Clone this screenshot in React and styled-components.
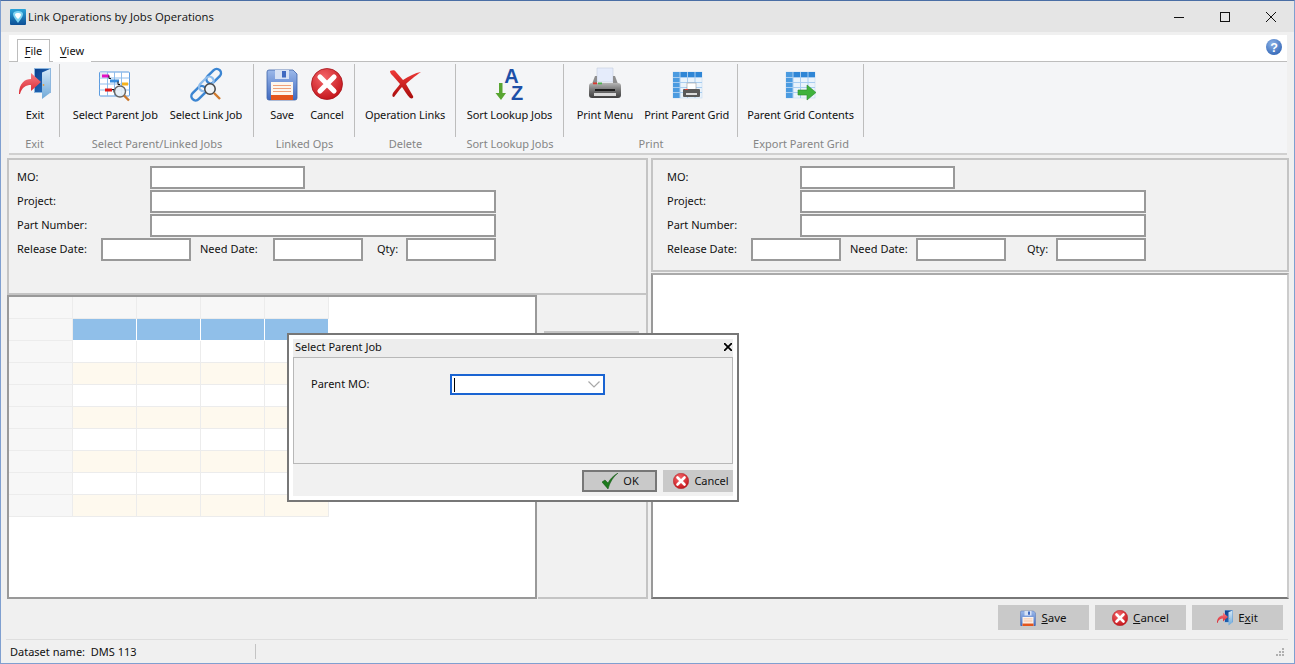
import React from 'react';
import styled, { createGlobalStyle } from 'styled-components';

const GlobalStyle = createGlobalStyle`
  html, body {
    margin: 0;
    padding: 0;
    overflow: hidden;
  }
  body {
    font-family: "Noto Sans", "Liberation Sans", sans-serif;
    font-size: 11px;
    color: #111;
  }
  * {
    box-sizing: border-box;
  }
`;

const Window = styled.div`
  position: relative;
  width: 1295px;
  height: 664px;
  display: flex;
  flex-direction: column;
  background: #f0f0f0;
  border: 1px solid #7f9fd0;
  border-top: 1px solid #4a6ea5;
`;

const TitleBar = styled.div`
  height: 31px;
  flex: none;
  background: #e5e5e5;
  display: flex;
  align-items: center;
  padding: 0 18px 0 9px;
`;

const TitleText = styled.div`
  font-family: "Open Sans", "Noto Sans", sans-serif;
  font-size: 11.3px;
  margin-left: 2px;
  flex: 1;
`;

const WindowControls = styled.div`
  display: flex;
  gap: 36px;
`;

const TabRow = styled.div`
  height: 27px;
  flex: none;
  margin: 3px 7px 0 8px;
  padding-left: 8px;
  background: #fff;
  border-bottom: 1px solid #bdbdbd;
  display: flex;
  align-items: flex-end;
  position: relative;
`;

const Tab = styled.div`
  height: ${(p) => (p.$active ? '23px' : '22px')};
  width: ${(p) => (p.$active ? '33px' : '38px')};
  margin-left: ${(p) => (p.$active ? 0 : 3)}px;
  margin-bottom: -1px;
  padding-top: 3px;
  text-align: center;
  background: #fff;
  border: ${(p) => (p.$active ? '1px solid #bdbdbd' : 'none')};
  border-bottom: none;
  u {
    text-underline-offset: 2px;
  }
`;

const HelpSpot = styled.div`
  position: absolute;
  right: 5px;
  top: 4px;
  line-height: 0;
`;

const Ribbon = styled.div`
  height: 93px;
  flex: none;
  margin: 0 7px 0 8px;
  background: #f4f5f7;
  border-bottom: 2px solid #d0d0d0;
  display: flex;
`;

const Group = styled.div`
  width: ${(p) => p.$w}px;
  flex: none;
  display: flex;
  flex-direction: column;
`;

const GroupButtons = styled.div`
  height: 73px;
  margin-top: 2px;
  padding-left: ${(p) => p.$pl || 0}px;
  border-right: 1px solid #bdbdbd;
  display: flex;
  justify-content: center;
  gap: ${(p) => p.$gap || 0}px;
`;

const GroupLabel = styled.div`
  height: 14px;
  line-height: 14px;
  text-align: center;
  color: #858585;
  white-space: nowrap;
`;

const RibbonButton = styled.div`
  display: flex;
  flex-direction: column;
  align-items: center;
  white-space: nowrap;
  padding-top: 4px;
`;

const IconSlot = styled.div`
  height: 32px;
  line-height: 0;
  display: flex;
  align-items: flex-start;
  svg {
    overflow: visible;
  }
`;

const ButtonLabel = styled.div`
  margin-top: 7px;
  line-height: 16px;
  letter-spacing: -0.1px;
`;

const Main = styled.div`
  flex: none;
  height: 441px;
  margin: 3px 5px 0 6px;
  display: flex;
  gap: 3px;
`;

const Side = styled.div`
  width: ${(p) => p.$w}px;
  flex: none;
  display: flex;
  flex-direction: column;
`;

const FormPanel = styled.div`
  height: ${(p) => p.$h}px;
  flex: none;
  background: #f1f1f1;
  border: 2px solid #c4c4c4;
  padding: 6px 8px 0 ${(p) => p.$pl}px;
  display: flex;
  flex-direction: column;
  gap: 1px;
`;

const FormRow = styled.div`
  display: flex;
  align-items: center;
  height: 23px;
`;

const FieldLabel = styled.div`
  width: ${(p) => p.$w}px;
  flex: none;
  margin-left: ${(p) => p.$ml || 0}px;
  padding-bottom: 2px;
  white-space: nowrap;
`;

const Field = styled.div`
  width: ${(p) => p.$w}px;
  height: 23px;
  flex: none;
  background: #fff;
  border: 2px solid #999;
`;

const LowerRow = styled.div`
  flex: 1;
  display: flex;
  min-height: 0;
`;

const GridFrame = styled.div`
  width: 530px;
  flex: none;
  background: #fff;
  border: 2px solid #999;
`;

const GridTable = styled.div`
  display: grid;
  grid-template-columns: repeat(5, 64px);
  grid-auto-rows: 22px;
  width: 320px;
`;

const GridCell = styled.div`
  background: ${(p) =>
    p.$kind === 'head' ? '#f7f7f7' : p.$kind === 'sel' ? '#90bfe9' : p.$kind === 'alt' ? '#fef9ee' : '#fff'};
  border-right: 1px solid ${(p) => (p.$kind === 'sel' ? '#fff' : '#ececec')};
  border-bottom: 1px solid ${(p) => (p.$kind === 'sel' ? '#fff' : '#ececec')};
`;

const MiddleStrip = styled.div`
  flex: 1;
  background: #f1f1f1;
  border-right: 2px solid #c4c4c4;
  border-bottom: 2px solid #c4c4c4;
  padding: 36px 7px 0 6px;
  margin-left: 1px;
`;

const StripInner = styled.div`
  height: 120px;
  border-top: 2px solid #c4c4c4;
`;

const WhitePane = styled.div`
  flex: 1;
  margin-top: 1px;
  background: #fff;
  border: 2px solid #aaa;
  border-left-color: #999;
  border-bottom-color: #777;
  border-right-color: #ccc;
`;

const ActionRow = styled.div`
  height: 40px;
  flex: none;
  padding: 6px 11px 0 0;
  display: flex;
  justify-content: flex-end;
  gap: 6px;
`;

const ActionButton = styled.div`
  width: 91px;
  height: 25px;
  background: #c9c9c9;
  display: flex;
  align-items: center;
  justify-content: center;
  gap: 5px;
  line-height: 0;
  font-size: 11.5px;
  span {
    line-height: 16px;
  }
`;

const StatusBar = styled.div`
  flex: 1;
  margin: 0 6px 0 5px;
  border-top: 1px solid #dedede;
  display: flex;
  align-items: center;
  position: relative;
  padding-left: 4px;
`;

const StatusCell = styled.div`
  width: 246px;
  height: 15px;
  line-height: 15px;
  border-right: 1px solid #c4c4c4;
  white-space: pre;
`;

const Grip = styled.div`
  position: absolute;
  right: 3px;
  bottom: 6px;
  line-height: 0;
`;

const Dialog = styled.div`
  position: absolute;
  left: 286px;
  top: 332px;
  width: 452px;
  height: 169px;
  background: #fff;
  border: 2px solid #777;
  padding: 4px;
  display: flex;
  flex-direction: column;
`;

const DialogTitle = styled.div`
  height: 18px;
  flex: none;
  background: #ededed;
  display: flex;
  align-items: center;
  justify-content: space-between;
  padding: 0 1px 3px 2px;
  line-height: 0;
`;

const DialogTitleText = styled.span`
  line-height: 14px;
`;

const DialogBody = styled.div`
  height: 107px;
  flex: none;
  background: #f1f1f1;
  border: 1px solid #b8b8b8;
  padding: 16px 0 0 17px;
  display: flex;
  align-items: flex-start;
`;

const DialogLabel = styled.div`
  width: 139px;
  line-height: 20px;
  flex: none;
`;

const Combo = styled.div`
  width: 155px;
  height: 21px;
  background: #fff;
  border: 2px solid #1a64d2;
  display: flex;
  align-items: center;
  justify-content: space-between;
  padding: 0 3px 0 2px;
  line-height: 0;
`;

const Caret = styled.div`
  width: 1px;
  height: 14px;
  background: #000;
`;

const DialogFooter = styled.div`
  flex: 1;
  background: #f1f1f1;
  display: flex;
  justify-content: flex-end;
  gap: 6px;
  padding-top: 6px;
`;

const DialogButton = styled.div`
  width: ${(p) => p.$w}px;
  height: 22px;
  padding-left: ${(p) => p.$pl || 0}px;
  background: #c9c9c9;
  border: ${(p) => (p.$default ? '2px solid #777' : 'none')};
  display: flex;
  align-items: center;
  justify-content: center;
  gap: 5px;
  line-height: 0;
  span {
    line-height: 16px;
  }
`;

const AppIcon = () => (
  <svg width="16" height="16" viewBox="0 0 16 16">
    <defs>
      <linearGradient id="appbg" x1="0" y1="0" x2="0" y2="1">
        <stop offset="0" stopColor="#2aa3d8" />
        <stop offset="1" stopColor="#0d4f96" />
      </linearGradient>
    </defs>
    <rect width="16" height="16" rx="1" fill="url(#appbg)" />
    <path d="M3 5c0-2 2.500-3 5-3s5 1 5 3c0 3-3 6-5 9-2-3-5-6-5-9z" fill="#7fd4f2" />
    <path d="M5 5.500c0-1 1.500-1.500 3-1.500s3 .5 3 1.500c0 1.500-1.500 3-3 4.500-1.500-1.500-3-3-3-4.500z" fill="#fff" />
  </svg>
);

const Minimize = () => (
  <svg width="10" height="10" viewBox="0 0 10 10">
    <path d="M0 5.500h10" stroke="#111" fill="none" />
  </svg>
);

const Maximize = () => (
  <svg width="10" height="10" viewBox="0 0 10 10">
    <rect x=".5" y=".5" width="9" height="9" stroke="#111" fill="none" />
  </svg>
);

const CloseGlyph = ({ size = 10, weight = 1, color = '#111' }) => (
  <svg width={size} height={size} viewBox="0 0 10 10">
    <path d="M0 0l10 10M10 0L0 10" stroke={color} strokeWidth={weight} fill="none" />
  </svg>
);

const HelpIcon = () => (
  <svg width="16" height="16" viewBox="0 0 16 16">
    <defs>
      <radialGradient id="helpbg" cx=".4" cy=".3" r=".8">
        <stop offset="0" stopColor="#8cb2e6" />
        <stop offset="1" stopColor="#2d62b4" />
      </radialGradient>
    </defs>
    <circle cx="8" cy="8" r="8" fill="url(#helpbg)" />
    <text x="8" y="12.500" textAnchor="middle" fontFamily="Liberation Sans, sans-serif" fontWeight="700" fontSize="12.500" fill="#fff">?</text>
  </svg>
);

const ExitIcon = ({ size = 32 }) => (
  <svg width={size} height={size} viewBox="0 0 32 32">
    <defs>
      <linearGradient id="exitdoor" x1="0" y1="0" x2="1" y2="1">
        <stop offset="0" stopColor="#0b3f8c" />
        <stop offset="1" stopColor="#2a76c4" />
      </linearGradient>
      <linearGradient id="exitpanel" x1="0" y1="0" x2="0" y2="1">
        <stop offset="0" stopColor="#d5e9f8" />
        <stop offset="1" stopColor="#6ea8d8" />
      </linearGradient>
      <linearGradient id="exitarrow" x1="0" y1="0" x2="0" y2="1">
        <stop offset="0" stopColor="#f77f85" />
        <stop offset="1" stopColor="#d8222c" />
      </linearGradient>
    </defs>
    <rect x="15" y="0" width="17" height="25" fill="#8db7df" />
    <rect x="16" y="1" width="15" height="23" fill="url(#exitdoor)" />
    <path d="M23 4.500L31 1v24l-8 6z" fill="url(#exitpanel)" />
    <circle cx="24.500" cy="17" r=".9" fill="#e39a3a" />
    <path d="M0 26C0 15 6 11 12 11V5l10 9-10 9v-6c-5 0-9 2-11 9z" fill="url(#exitarrow)" />
  </svg>
);

const GanttIcon = () => (
  <svg width="32" height="32" viewBox="0 -3.500 32 32">
    <rect x=".5" y=".5" width="30" height="24" rx="1" fill="#fff" stroke="#5c9ce0" />
    <path d="M.5 6.500h30M.5 12.500h30M.5 18.500h30M8.500 .5v24M15.500 .5v24M22.500 .5v24" stroke="#8fbdec" fill="none" />
    <rect x="1" y="1" width="7" height="5" fill="#e3e9f4" />
    <rect x="3" y="3" width="7" height="3" fill="#e312c4" />
    <rect x="11" y="8" width="9" height="3" fill="#3a8fe0" />
    <rect x="23" y="11" width="6" height="3" fill="#f5b21c" />
    <rect x="6" y="17" width="7" height="3" fill="#e01818" />
    <path d="M10 4v3h2M19 10v3h2M13 18h2v3" stroke="#111" fill="none" />
    <circle cx="21" cy="20" r="5.500" fill="#e4eef6" fillOpacity=".9" stroke="#666" strokeWidth="1.400" />
    <path d="M25 24l5 5" stroke="#c9782c" strokeWidth="2.400" />
  </svg>
);

const LinkIcon = () => (
  <svg width="33" height="33" viewBox="0 0 33 33">
    <g fill="none">
      <rect x="0" y="21" width="17" height="8.500" rx="4.200" transform="rotate(-45 8.500 25)" stroke="#3b85d2" strokeWidth="2.500" />
      <rect x="15" y="4" width="17" height="8.500" rx="4.200" transform="rotate(-45 23.500 8)" stroke="#3b85d2" strokeWidth="2.500" />
      <rect x="8" y="11.500" width="17" height="8.500" rx="4.200" transform="rotate(-45 16.500 16)" stroke="#8dbcec" strokeWidth="2.200" />
    </g>
    <circle cx="20" cy="21" r="5.200" fill="#eef3f7" stroke="#444" strokeWidth="1.500" />
    <path d="M24 25l6 6" stroke="#d07a2c" strokeWidth="2.400" />
  </svg>
);

const SaveIcon = ({ size = 32 }) => (
  <svg width={size} height={size} viewBox="0 -1 32 32">
    <defs>
      <linearGradient id="savebody" x1="0" y1="0" x2="0" y2="1">
        <stop offset="0" stopColor="#9cb9ea" />
        <stop offset="1" stopColor="#3f69c0" />
      </linearGradient>
    </defs>
    <path d="M1 3a2 2 0 012-2h24l4 4v24a2 2 0 01-2 2H3a2 2 0 01-2-2z" fill="url(#savebody)" stroke="#3e62a8" strokeWidth=".8" />
    <rect x="9" y="1" width="14" height="9" fill="#d7e2f5" />
    <rect x="16" y="2" width="4" height="6.500" fill="#3f69c0" />
    <rect x="5" y="13" width="22" height="18" fill="#fdf6ee" />
    <path d="M7 16.500h18M7 19.500h18M7 22.500h18" stroke="#f0a17a" />
    <rect x="5" y="26" width="22" height="5" fill="#e4541c" />
  </svg>
);

const CancelIcon = ({ size = 32 }) => (
  <svg width={size} height={size} viewBox="0 0 32 32">
    <defs>
      <radialGradient id="cancelbg" cx=".4" cy=".3" r=".8">
        <stop offset="0" stopColor="#f4666a" />
        <stop offset="1" stopColor="#bf0c12" />
      </radialGradient>
    </defs>
    <circle cx="16" cy="16" r="15.500" fill="url(#cancelbg)" stroke="#a4141a" strokeWidth=".8" />
    <path d="M9 9l14 14M23 9L9 23" stroke="#fff" strokeWidth="5.200" strokeLinecap="round" />
  </svg>
);

const DeleteIcon = () => (
  <svg width="32" height="32" viewBox="0 0 32 32">
    <defs>
      <linearGradient id="delred" x1="0" y1="0" x2="0" y2="1">
        <stop offset="0" stopColor="#ef3a38" />
        <stop offset="1" stopColor="#a80c0c" />
      </linearGradient>
    </defs>
    <path d="M1 3c3-1 5-1 6 1l7 8C20 8 26 5 32 4c-6 4-12 9-15 12l7 12c1 2-1 3-3 2-3-3-6-8-8-11-3 3-5 6-8 10-2 0-2-2-1-4 2-3 5-6 7-9L4 8C2 6 1 5 1 3z" fill="url(#delred)" />
  </svg>
);

const SortIcon = () => (
  <svg width="32" height="32" viewBox="0 0 32 32">
    <text x="17.500" y="15" textAnchor="middle" fontFamily="Liberation Sans, sans-serif" fontWeight="700" fontSize="20" fill="#1d50a8">A</text>
    <text x="23" y="32" textAnchor="middle" fontFamily="Liberation Sans, sans-serif" fontWeight="700" fontSize="20" fill="#1d50a8">Z</text>
    <path d="M5 15h3.500v10H12l-5 7-5.500-7H5z" fill="#58a531" />
  </svg>
);

const PrinterIcon = () => (
  <svg width="32" height="32" viewBox="0 0 32 32">
    <defs>
      <linearGradient id="printbody" x1="0" y1="0" x2="0" y2="1">
        <stop offset="0" stopColor="#b5b5b5" />
        <stop offset=".55" stopColor="#6a6a6a" />
        <stop offset="1" stopColor="#3e3e3e" />
      </linearGradient>
    </defs>
    <path d="M8 0h16v14H8z" fill="#e5ecfb" stroke="#c4cede" strokeWidth=".6" />
    <path d="M6 8h2v8h16V8h2l3 8H3z" fill="#8e8e8e" />
    <path d="M3 15h26c2 0 3 1 3 3v9c0 2-1 3-3 3H3c-2 0-3-1-3-3v-9c0-2 1-3 3-3z" fill="url(#printbody)" />
    <rect x="4" y="14.500" width="4" height="1.800" fill="#d93a30" />
    <rect x="9" y="14.500" width="4" height="1.800" fill="#4caf50" />
    <rect x="6" y="21" width="20" height="2" fill="#1c1c1c" />
    <rect x="5" y="25" width="22" height="3" fill="#d9d9d9" />
  </svg>
);

const SheetBase = () => (
  <>
    <rect x="1" y="1" width="29" height="26" fill="#eaf3fb" stroke="#bcd6ee" strokeWidth=".5" />
    <rect x="1" y="1" width="29" height="5" fill="#2f86d6" />
    <rect x="1" y="1" width="7" height="26" fill="#4b9be0" />
    <path d="M1 6.500h29M1 11.500h29M1 16.500h29M1 21.500h29M8 1v26M15.500 1v26M23 1v26" stroke="#a9cdf0" fill="none" />
  </>
);

const GridPrintIcon = () => (
  <svg width="32" height="32" viewBox="-1 -3 32 32">
    <SheetBase />
    <rect x="15" y="12" width="9" height="8" fill="#fff" stroke="#999" strokeWidth=".6" />
    <rect x="11" y="18" width="17" height="8" rx="1" fill="#5a5a5a" />
    <rect x="13" y="18" width="3" height="1" fill="#d93a30" />
    <rect x="14" y="22" width="11" height="2" fill="#ddd" />
  </svg>
);

const GridExportIcon = () => (
  <svg width="32" height="32" viewBox="0 -3 32 32">
    <SheetBase />
    <path d="M13 19h9v-5l9 7.500-9 7.500v-5h-9z" fill="#3fb23c" stroke="#2b8a2a" strokeWidth=".6" />
  </svg>
);

const CheckIcon = () => (
  <svg width="16" height="16" viewBox="0 0 16 16">
    <path d="M0 9l3-2 3 3c2-4 5-7 10-10C11 4 8 9 6 16z" fill="#1c7a1c" stroke="#0d4d0d" strokeWidth=".5" />
  </svg>
);

const Chevron = () => (
  <svg width="12" height="7" viewBox="0 0 12 7">
    <path d="M.5 .5L6 6l5.500-5.500" stroke="#a8a8a8" strokeWidth="1.200" fill="none" />
  </svg>
);

const GripIcon = () => (
  <svg width="9" height="9" viewBox="0 0 9 9" fill="#b0b0b0">
    <rect x="6" y="0" width="2" height="2" />
    <rect x="3" y="3" width="2" height="2" />
    <rect x="6" y="3" width="2" height="2" />
    <rect x="0" y="6" width="2" height="2" />
    <rect x="3" y="6" width="2" height="2" />
    <rect x="6" y="6" width="2" height="2" />
  </svg>
);

const ribbonGroups = [
  { label: 'Exit', w: 51, pl: 2, items: [{ text: 'Exit', icon: <ExitIcon /> }] },
  {
    label: 'Select Parent/Linked Jobs',
    w: 194,
    gap: 12,
    pl: 2,
    items: [
      { text: 'Select Parent Job', icon: <GanttIcon /> },
      { text: 'Select Link Job', icon: <LinkIcon /> },
    ],
  },
  {
    label: 'Linked Ops',
    w: 101,
    gap: 12,
    pl: 2,
    items: [
      { text: 'Save', icon: <SaveIcon /> },
      { text: 'Cancel', icon: <CancelIcon /> },
    ],
  },
  { label: 'Delete', w: 101, items: [{ text: 'Operation Links', icon: <DeleteIcon /> }] },
  { label: 'Sort Lookup Jobs', w: 108, items: [{ text: 'Sort Lookup Jobs', icon: <SortIcon /> }] },
  {
    label: 'Print',
    w: 174,
    gap: 11,
    pl: 5,
    items: [
      { text: 'Print Menu', icon: <PrinterIcon /> },
      { text: 'Print Parent Grid', icon: <GridPrintIcon /> },
    ],
  },
  { label: 'Export Parent Grid', w: 126, items: [{ text: 'Parent Grid Contents', icon: <GridExportIcon /> }] },
];

const rowKinds = ['head', 'sel', 'plain', 'alt', 'plain', 'alt', 'plain', 'alt', 'plain', 'alt'];

const JobForm = ({ h, pl, needLabel, qtyGap }) => (
  <FormPanel $h={h} $pl={pl}>
    <FormRow>
      <FieldLabel $w={133}>MO:</FieldLabel>
      <Field $w={155} />
    </FormRow>
    <FormRow>
      <FieldLabel $w={133}>Project:</FieldLabel>
      <Field $w={346} />
    </FormRow>
    <FormRow>
      <FieldLabel $w={133}>Part Number:</FieldLabel>
      <Field $w={346} />
    </FormRow>
    <FormRow>
      <FieldLabel $w={84}>Release Date:</FieldLabel>
      <Field $w={90} />
      <FieldLabel $w={needLabel} $ml={9}>Need Date:</FieldLabel>
      <Field $w={90} />
      <FieldLabel $w={29} $ml={qtyGap}>Qty:</FieldLabel>
      <Field $w={90} />
    </FormRow>
  </FormPanel>
);

const App = () => (
  <>
    <GlobalStyle />
    <Window>
      <TitleBar>
        <AppIcon />
        <TitleText>Link Operations by Jobs Operations</TitleText>
        <WindowControls>
          <Minimize />
          <Maximize />
          <CloseGlyph />
        </WindowControls>
      </TitleBar>

      <TabRow>
        <Tab $active><u>F</u>ile</Tab>
        <Tab><u>V</u>iew</Tab>
        <HelpSpot>
          <HelpIcon />
        </HelpSpot>
      </TabRow>

      <Ribbon>
        {ribbonGroups.map((g) => (
          <Group key={g.label} $w={g.w}>
            <GroupButtons $gap={g.gap} $pl={g.pl}>
              {g.items.map((it) => (
                <RibbonButton key={it.text}>
                  <IconSlot>{it.icon}</IconSlot>
                  <ButtonLabel>{it.text}</ButtonLabel>
                </RibbonButton>
              ))}
            </GroupButtons>
            <GroupLabel>{g.label}</GroupLabel>
          </Group>
        ))}
      </Ribbon>

      <Main>
        <Side $w={641}>
          <JobForm h={137} pl={8} needLabel={73} qtyGap={14} />
          <LowerRow>
            <GridFrame>
              <GridTable>
                {rowKinds.map((kind, r) =>
                  [0, 1, 2, 3, 4].map((c) => (
                    <GridCell key={`${r}-${c}`} $kind={c === 0 ? 'head' : kind} />
                  ))
                )}
              </GridTable>
            </GridFrame>
            <MiddleStrip>
              <StripInner />
            </MiddleStrip>
          </LowerRow>
        </Side>
        <Side $w={638}>
          <JobForm h={114} pl={14} needLabel={66} qtyGap={21} />
          <WhitePane />
        </Side>
      </Main>

      <ActionRow>
        <ActionButton>
          <SaveIcon size={16} />
          <span><u>S</u>ave</span>
        </ActionButton>
        <ActionButton>
          <CancelIcon size={16} />
          <span><u>C</u>ancel</span>
        </ActionButton>
        <ActionButton>
          <ExitIcon size={16} />
          <span>E<u>x</u>it</span>
        </ActionButton>
      </ActionRow>

      <StatusBar>
        <StatusCell>Dataset name:  DMS 113</StatusCell>
        <Grip>
          <GripIcon />
        </Grip>
      </StatusBar>

      <Dialog>
        <DialogTitle>
          <DialogTitleText>Select Parent Job</DialogTitleText>
          <CloseGlyph size={8} weight={2.200} color="#000" />
        </DialogTitle>
        <DialogBody>
          <DialogLabel>Parent MO:</DialogLabel>
          <Combo>
            <Caret />
            <Chevron />
          </Combo>
        </DialogBody>
        <DialogFooter>
          <DialogButton $w={75} $default $pl={2}>
            <CheckIcon />
            <span>OK</span>
          </DialogButton>
          <DialogButton $w={70} $pl={6}>
            <CancelIcon size={16} />
            <span>Cancel</span>
          </DialogButton>
        </DialogFooter>
      </Dialog>
    </Window>
  </>
);

export default App;
